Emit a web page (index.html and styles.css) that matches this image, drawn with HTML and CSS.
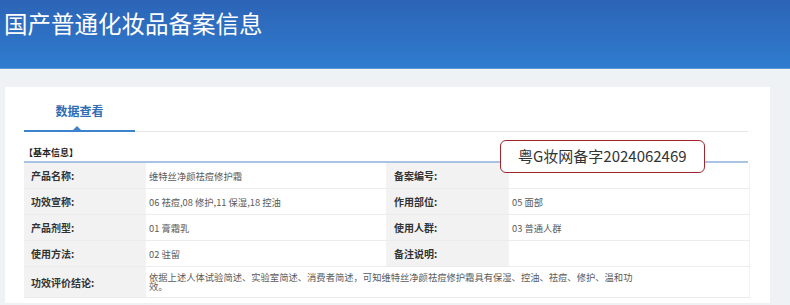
FILE: index.html
```html
<!DOCTYPE html>
<html lang="zh-CN">
<head>
    <meta charset="UTF-8" />
    <title>国产普通化妆品备案信息</title>
    <link rel="stylesheet" href="styles.css">
</head>
<body>

<!-- Header -->
<header class="banner">
    <h1>国产普通化妆品备案信息</h1>
</header>

<!-- Main Content -->
<main class="page">
    <section class="card">
        <div class="tabs">
            <div class="tab active">数据查看</div>
        </div>

        <div class="block">
            <h3 class="block-title">【基本信息】</h3>
            <table class="info">
                <tr>
                    <th>产品名称:</th>
                    <td>维特丝净颜祛痘修护霜</td>
                    <th>备案编号:</th>
                    <td></td>
                </tr>
                <tr>
                    <th>功效宣称:</th>
                    <td>06 祛痘,08 修护,11 保湿,18 控油</td>
                    <th>作用部位:</th>
                    <td>05 面部</td>
                </tr>
                <tr>
                    <th>产品剂型:</th>
                    <td>01 膏霜乳</td>
                    <th>使用人群:</th>
                    <td>03 普通人群</td>
                </tr>
                <tr>
                    <th>使用方法:</th>
                    <td>02 驻留</td>
                    <th>备注说明:</th>
                    <td></td>
                </tr>
                <tr class="tall">
                    <th>功效评价结论:</th>
                    <td colspan="3"><div class="conclusion">依据上述人体试验简述、实验室简述、消费者简述，可知维特丝净颜祛痘修护霜具有保湿、控油、祛痘、修护、温和功效。</div></td>
                </tr>
            </table>

            <div class="stamp">粤G妆网备字2024062469</div>
        </div>
    </section>
</main>

</body>
</html>
```

FILE: styles.css
```css
body {
    margin: 0;
    padding: 0;
    background: #eff2f5;
    font-family: "Noto Sans CJK SC", "Liberation Sans", sans-serif;
    color: #333;
}

.banner {
    height: 69px;
    background: linear-gradient(to bottom, #2c64b6, #2f7ccf);
    border-bottom: 1px solid #5a9ad8;
    box-sizing: border-box;
}

.banner h1 {
    margin: 0;
    padding: 6px 0 0 4px;
    font-size: 23.5px;
    font-weight: normal;
    color: #fff;
    line-height: 34px;
}

.page {
    padding: 18px 20px 0 5px;
}

.card {
    background: #fff;
    height: 216px;
    padding: 0 22px 0 19px;
}

.tabs {
    height: 44px;
    border-bottom: 1px solid #e4e7ea;
    display: flex;
    align-items: flex-end;
}

.tab {
    position: relative;
    width: 111px;
    height: 44px;
    line-height: 46px;
    text-align: center;
    font-size: 12px;
    font-weight: bold;
    color: #2e6db4;
    box-sizing: border-box;
    border-bottom: 2px solid #3c82cc;
    margin-bottom: -1px;
}

.tab.active::after {
    content: "";
    position: absolute;
    left: 49px;
    bottom: 0;
    border-left: 4px solid transparent;
    border-right: 4px solid transparent;
    border-bottom: 4px solid #3c82cc;
}

.block {
    position: relative;
    padding-top: 15px;
}

.block-title {
    margin: 0;
    font-size: 9px;
    font-weight: bold;
    color: #222;
    line-height: 12px;
    padding-bottom: 2px;
    border-bottom: 2px solid #a9c3e3;
}

.info {
    width: 724px;
    border-collapse: collapse;
    table-layout: fixed;
    font-size: 9.3px;
}

.info th,
.info td {
    height: 25px;
    padding: 0 3px;
    text-align: left;
    border-bottom: 1px solid #ececec;
    border-right: 1px solid #f3f3f3;
}

.info th {
    width: 106px;
    padding: 0 8px 0 7px;
    background: #f2f2f2;
    color: #333;
    font-size: 10px;
    font-weight: bold;
}

.info td {
    width: 234px;
    color: #5a5a5a;
}

.info tr.tall th,
.info tr.tall td {
    height: 30px;
    line-height: 9px;
}

.conclusion {
    max-width: 487px;
}

.stamp {
    position: absolute;
    left: 476px;
    top: 8px;
    width: 205px;
    height: 33px;
    box-sizing: border-box;
    background: #fff;
    border: 1px solid #a1252e;
    border-radius: 6px;
    font-size: 15px;
    line-height: 30px;
    padding-left: 17px;
    color: #333;
}
```
